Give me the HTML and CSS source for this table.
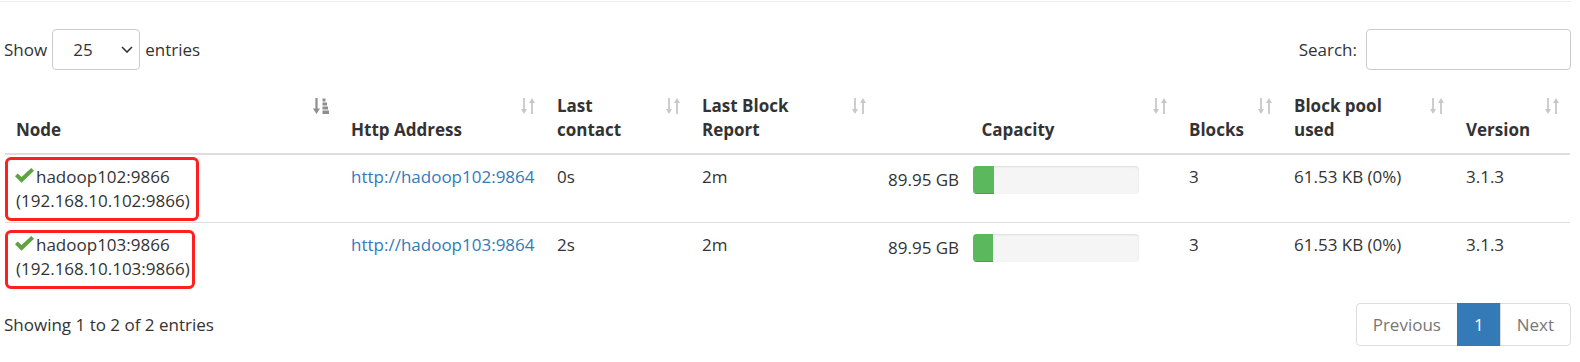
FILE: index.html
```html
<!DOCTYPE html>
<html lang="en">
<head>
    <meta charset="UTF-8">
    <meta name="viewport" content="width=device-width, initial-scale=1.0">
    <title>Datanode Information</title>
    <link rel="stylesheet" href="styles.css">
</head>
<body>
    <div class="rule"></div>
    <div class="page">
        <div class="controls">
            <label class="length">
                Show
                <span class="select">
                    <span>25</span>
                    <svg class="chevron" width="12" height="7" viewBox="0 0 12 7"><path d="M1 1l5 5 5-5" fill="none" stroke="#333" stroke-width="1.6"/></svg>
                </span>
                entries
            </label>
            <label class="search">Search: <input type="search"></label>
        </div>

        <table class="nodes">
            <colgroup>
                <col style="width: 335px">
                <col style="width: 206px">
                <col style="width: 145px">
                <col style="width: 186px">
                <col style="width: 301px">
                <col style="width: 105px">
                <col style="width: 172px">
                <col style="width: 115px">
            </colgroup>
            <thead>
                <tr>
                    <th>Node
                        <svg class="sort active" viewBox="0 0 16 16"><path d="M2.4 0h2.2v10.5H7L3.5 16 0 10.5h2.4z"/><rect x="9.5" y="0.5" width="3" height="3"/><rect x="9.5" y="4.5" width="4.5" height="3"/><rect x="9.5" y="8.5" width="5.5" height="3"/><rect x="9.5" y="12.5" width="6.5" height="3.5"/></svg>
                    </th>
                    <th>Http Address
                        <svg class="sort" viewBox="0 0 14 16"><path d="M2.1 0h1.8v11H6L3 16 0 11h2.1z M10.1 16h1.8V5H14L11 0 8 5h2.1z"/></svg>
                    </th>
                    <th>Last<br>contact
                        <svg class="sort" viewBox="0 0 14 16"><path d="M2.1 0h1.8v11H6L3 16 0 11h2.1z M10.1 16h1.8V5H14L11 0 8 5h2.1z"/></svg>
                    </th>
                    <th>Last Block<br>Report
                        <svg class="sort" viewBox="0 0 14 16"><path d="M2.1 0h1.8v11H6L3 16 0 11h2.1z M10.1 16h1.8V5H14L11 0 8 5h2.1z"/></svg>
                    </th>
                    <th class="center">Capacity
                        <svg class="sort" viewBox="0 0 14 16"><path d="M2.1 0h1.8v11H6L3 16 0 11h2.1z M10.1 16h1.8V5H14L11 0 8 5h2.1z"/></svg>
                    </th>
                    <th>Blocks
                        <svg class="sort" viewBox="0 0 14 16"><path d="M2.1 0h1.8v11H6L3 16 0 11h2.1z M10.1 16h1.8V5H14L11 0 8 5h2.1z"/></svg>
                    </th>
                    <th>Block pool<br>used
                        <svg class="sort" viewBox="0 0 14 16"><path d="M2.1 0h1.8v11H6L3 16 0 11h2.1z M10.1 16h1.8V5H14L11 0 8 5h2.1z"/></svg>
                    </th>
                    <th>Version
                        <svg class="sort" viewBox="0 0 14 16"><path d="M2.1 0h1.8v11H6L3 16 0 11h2.1z M10.1 16h1.8V5H14L11 0 8 5h2.1z"/></svg>
                    </th>
                </tr>
            </thead>
            <tbody>
                <tr>
                    <td>
                        <div class="node">
                            <span class="mark mark-first"></span>
                            <svg class="alive" width="19" height="15" viewBox="0 0 18 14"><path d="M0 7.6L2.6 5l3.6 3.4L15.4 0 18 2.6 6.2 13.8z"/></svg>hadoop102:9866<br>(192.168.10.102:9866)
                        </div>
                    </td>
                    <td><a href="#">http://hadoop102:9864</a></td>
                    <td>0s</td>
                    <td>2m</td>
                    <td>
                        <div class="capacity">
                            <span class="cap-text">89.95 GB</span>
                            <div class="progress"><div class="progress-bar" style="width: 21px"></div></div>
                        </div>
                    </td>
                    <td>3</td>
                    <td>61.53 KB (0%)</td>
                    <td>3.1.3</td>
                </tr>
                <tr>
                    <td>
                        <div class="node">
                            <span class="mark mark-second"></span>
                            <svg class="alive" width="19" height="15" viewBox="0 0 18 14"><path d="M0 7.6L2.6 5l3.6 3.4L15.4 0 18 2.6 6.2 13.8z"/></svg>hadoop103:9866<br>(192.168.10.103:9866)
                        </div>
                    </td>
                    <td><a href="#">http://hadoop103:9864</a></td>
                    <td>2s</td>
                    <td>2m</td>
                    <td>
                        <div class="capacity">
                            <span class="cap-text">89.95 GB</span>
                            <div class="progress"><div class="progress-bar" style="width: 20px"></div></div>
                        </div>
                    </td>
                    <td>3</td>
                    <td>61.53 KB (0%)</td>
                    <td>3.1.3</td>
                </tr>
            </tbody>
        </table>

        <div class="footer">
            <div class="info">Showing 1 to 2 of 2 entries</div>
            <ul class="pagination">
                <li class="disabled"><a href="#">Previous</a></li>
                <li class="active"><a href="#">1</a></li>
                <li class="disabled"><a href="#">Next</a></li>
            </ul>
        </div>
    </div>
</body>
</html>
```

FILE: styles.css
```css
body {
    margin: 0;
    font-family: "Open Sans", "Noto Sans", sans-serif;
    font-size: 17px;
    line-height: 24px;
    color: #333;
    background-color: #fff;
}

.rule {
    width: 1571px;
    height: 1px;
    margin-top: 1px;
    background-color: #eee;
}

.page {
    width: 1567px;
    margin-left: 4px;
}

.controls {
    display: flex;
    justify-content: space-between;
    align-items: center;
    height: 41px;
    margin-top: 27px;
}

.length {
    display: flex;
    align-items: center;
    gap: 5px;
}

.select {
    display: flex;
    align-items: center;
    justify-content: space-between;
    box-sizing: border-box;
    width: 88px;
    height: 41px;
    padding: 0 6px 0 20px;
    border: 1px solid #ccc;
    border-radius: 4px;
}

.chevron {
    display: block;
}

.search {
    display: flex;
    align-items: center;
    gap: 9px;
}

.search input {
    box-sizing: border-box;
    width: 205px;
    height: 41px;
    border: 1px solid #ccc;
    border-radius: 4px;
    font: inherit;
}

.nodes {
    width: 1565px;
    margin: 14px 0 0 1px;
    table-layout: fixed;
    border-collapse: collapse;
}

.nodes th {
    position: relative;
    padding: 10px 30px 11px 11px;
    text-align: left;
    vertical-align: bottom;
    font-weight: 700;
    border-bottom: 2px solid #ddd;
}

.nodes th.center {
    text-align: center;
}

.sort {
    position: absolute;
    top: 14px;
    right: 11px;
    width: 14px;
    height: 16px;
    fill: #c8c8c8;
}

.sort.active {
    width: 16px;
    fill: #8e8e8e;
}

.nodes td {
    padding: 10px 11px 9px;
    vertical-align: top;
    border-top: 1px solid #ddd;
    white-space: nowrap;
}

.nodes a {
    color: #337ab7;
    text-decoration: none;
}

.node {
    position: relative;
}

.alive {
    margin: 0 2px 0 -1px;
    fill: #5fa341;
}

.mark {
    position: absolute;
    left: -11px;
    box-sizing: border-box;
    border: 3px solid #ff1f1f;
    border-radius: 6px;
}

.mark-first {
    top: -8px;
    width: 194px;
    height: 64px;
}

.mark-second {
    top: -3px;
    width: 190px;
    height: 59px;
}

.capacity {
    display: flex;
    align-items: center;
    gap: 15px;
    height: 28px;
    margin-top: 1px;
}

.cap-text {
    width: 70px;
    text-align: right;
}

.progress {
    width: 166px;
    height: 28px;
    overflow: hidden;
    border-radius: 4px;
    background-color: #f5f5f5;
    box-shadow: inset 0 1px 2px rgba(0, 0, 0, 0.1);
}

.progress-bar {
    height: 100%;
    background-color: #5cb85c;
    box-shadow: inset 0 -1px 0 rgba(0, 0, 0, 0.15);
}

.footer {
    display: flex;
    justify-content: space-between;
    align-items: center;
    margin-top: 13px;
}

.pagination {
    display: flex;
    margin: 0;
    padding: 0;
    list-style: none;
}

.pagination a {
    display: block;
    padding: 9px 16px;
    line-height: 23px;
    color: #777;
    text-decoration: none;
    border: 1px solid #ddd;
    margin-left: -1px;
}

.pagination li:first-child a {
    margin-left: 0;
    border-radius: 4px 0 0 4px;
}

.pagination li:last-child a {
    border-radius: 0 4px 4px 0;
}

.pagination .active a {
    color: #fff;
    background-color: #337ab7;
    border-color: #337ab7;
}
```
